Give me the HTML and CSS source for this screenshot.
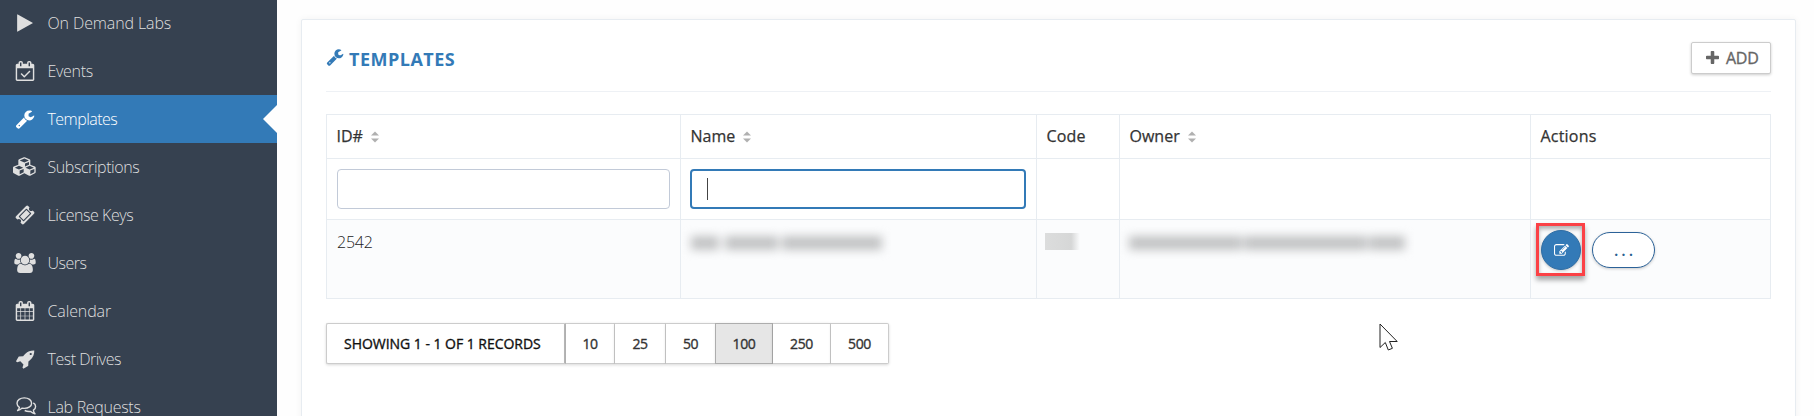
FILE: index.html
```
<!DOCTYPE html>
<html lang="en">
<head>
<meta charset="utf-8">
<title>Templates</title>
<link rel="stylesheet" href="styles.css">
</head>
<body>
<svg class="defs" aria-hidden="true">
  <symbol id="wrench" viewBox="0 0 1792 1792"><path d="M448 1472q0-26-19-45t-45-19-45 19-19 45 19 45 45 19 45-19 19-45zm644-420l-682 682q-37 37-90 37-52 0-91-37l-106-108q-38-36-38-90 0-53 38-91l681-681q39 98 114.500 173.500t173.500 114.500zm634-435q0 39-23 106-47 134-164.500 217.500t-258.500 83.500q-185 0-316.500-131.500t-131.500-316.500 131.500-316.500 316.500-131.500q58 0 121.500 16.500t107.500 46.500q16 11 16 28t-16 28l-293 169v224l193 107q5-3 79-48.500t135.500-81 70.500-35.500q15 0 23.500 10t8.500 25z"/></symbol>
  <symbol id="sort" viewBox="0 0 8 12"><path d="M4 0.500L8 4.500H0zM0 7.500H8L4 11.500z"/></symbol>
</svg>
<div class="app">
  <nav class="sidebar">
    <a class="item"><svg class="icon" viewBox="0 0 1792 1792"><path d="M1576 927l-1328 738q-23 13-39.500 3t-16.500-36v-1472q0-26 16.500-36t39.500 3l1328 738q23 13 23 31t-23 31z"/></svg><span class="t1">On Demand Labs</span></a>
    <a class="item"><svg class="icon" viewBox="-64 0 1792 1792"><path d="M1303 964l-512 512q-10 9-23 9t-23-9l-288-288q-9-10-9-23t9-22l46-46q9-9 22-9t23 9l220 220 444-444q10-9 23-9t22 9l46 46q9 9 9 22t-9 23zm-1175 700h1408v-1024h-1408v1024zm384-1216v-288q0-14-9-23t-23-9h-64q-14 0-23 9t-9 23v288q0 14 9 23t23 9h64q14 0 23-9t9-23zm768 0v-288q0-14-9-23t-23-9h-64q-14 0-23 9t-9 23v288q0 14 9 23t23 9h64q14 0 23-9t9-23zm384-64v1280q0 52-38 90t-90 38h-1408q-52 0-90-38t-38-90v-1280q0-52 38-90t90-38h128v-96q0-66 47-113t113-47h64q66 0 113 47t47 113v96h384v-96q0-66 47-113t113-47h64q66 0 113 47t47 113v96h128q52 0 90 38t38 90z"/></svg><span class="t2">Events</span></a>
    <a class="item active"><svg class="icon"><use href="#wrench"/></svg><span class="t3">Templates</span></a>
    <a class="item"><svg class="icon wide" viewBox="0 0 2304 1792"><path d="M640 1632l384-192v-314l-384 164v342zm-64-454l404-173-404-173-404 173zm1088 454l384-192v-314l-384 164v342zm-64-454l404-173-404-173-404 173zm-448-293l384-165v-266l-384 164v267zm-64-379l441-189-441-189-441 189zm1088 518v416q0 36-19 67t-52 47l-448 224q-25 14-57 14t-57-14l-448-224q-4-2-7-4-2 2-7 4l-448 224q-25 14-57 14t-57-14l-448-224q-33-16-52-47t-19-67v-416q0-38 21.500-70t56.500-48l434-186v-400q0-38 21.500-70t56.500-48l448-192q23-10 50-10t50 10l448 192q35 16 56.500 48t21.500 70v400l434 186q36 16 57 48t21 70z"/></svg><span class="t4">Subscriptions</span></a>
    <a class="item"><svg class="icon" viewBox="0 0 1792 1792"><path d="M1024 452l316 316-572 572-316-316zm-211 979l618-618q19-19 19-45t-19-45l-362-362q-18-18-45-18t-45 18l-618 618q-19 19-19 45t19 45l362 362q18 18 45 18t45-18zm889-637l-907 908q-37 37-90.500 37t-90.500-37l-126-126q56-56 56-136t-56-136-136-56-136 56l-125-126q-37-37-37-90.500t37-90.500l907-906q37-37 90.500-37t90.500 37l125 125q-56 56-56 136t56 136 136 56 136-56l126 125q37 37 37 90.500t-37 90.500z"/></svg><span class="t5">License Keys</span></a>
    <a class="item"><svg class="icon mid" viewBox="0 0 1920 1792"><path d="M593 896q-162 5-265 128h-134q-82 0-138-40.500t-56-118.500q0-353 124-353 6 0 43.500 21t97.500 42.500 119 21.500q67 0 133-23-5 37-5 66 0 139 81 256zm1071 637q0 120-73 189.500t-194 69.500h-874q-121 0-194-69.500t-73-189.500q0-53 3.500-103.500t14-109 26.500-108.500 43-97.500 62-81 85.500-53.500 111.500-20q10 0 43 21.500t73 48 107 48 135 21.500 135-21.500 107-48 73-48 43-21.500q61 0 111.500 20t85.500 53.500 62 81 43 97.500 26.500 108.500 14 109 3.500 103.500zm-1024-1277q0 106-75 181t-181 75-181-75-75-181 75-181 181-75 181 75 75 181zm704 384q0 159-112.500 271.500t-271.500 112.500-271.500-112.500-112.500-271.500 112.500-271.500 271.500-112.500 271.500 112.500 112.500 271.500zm576 225q0 78-56 118.500t-138 40.500h-134q-103-123-265-128 81-117 81-256 0-29-5-66 66 23 133 23 59 0 119-21.500t97.500-42.500 43.500-21q124 0 124 353zm-128-609q0 106-75 181t-181 75-181-75-75-181 75-181 181-75 181 75 75 181z"/></svg><span class="t6">Users</span></a>
    <a class="item"><svg class="icon" viewBox="0 0 1792 1792"><path d="M192 1664h288v-288h-288v288zm352 0h320v-288h-320v288zm-352-352h288v-320h-288v320zm352 0h320v-320h-320v320zm-352-384h288v-288h-288v288zm736 736h320v-288h-320v288zm-384-736h320v-288h-320v288zm768 736h288v-288h-288v288zm-384-352h320v-320h-320v320zm-352-864v-288q0-13-9.500-22.500t-22.500-9.500h-64q-13 0-22.500 9.500t-9.500 22.500v288q0 13 9.500 22.500t22.500 9.500h64q13 0 22.500-9.500t9.500-22.500zm736 864h288v-320h-288v320zm-384-384h320v-288h-320v288zm384 0h288v-288h-288v288zm32-480v-288q0-13-9.500-22.500t-22.500-9.500h-64q-13 0-22.500 9.500t-9.500 22.500v288q0 13 9.500 22.500t22.500 9.500h64q13 0 22.500-9.500t9.500-22.500zm384-64v1280q0 52-38 90t-90 38h-1408q-52 0-90-38t-38-90v-1280q0-52 38-90t90-38h128v-96q0-66 47-113t113-47h64q66 0 113 47t47 113v96h384v-96q0-66 47-113t113-47h64q66 0 113 47t47 113v96h128q52 0 90 38t38 90z"/></svg><span class="t7">Calendar</span></a>
    <a class="item"><svg class="icon" viewBox="-64 0 1792 1792"><path d="M1440 448q0-40-28-68t-68-28-68 28-28 68 28 68 68 28 68-28 28-68zm224-288q0 249-75.500 430.500t-253.500 360.500q-81 80-195 176l-20 379q-2 16-16 26l-384 224q-7 4-16 4-12 0-23-9l-64-64q-13-14-8-32l85-276-281-281-276 85q-3 1-9 1-14 0-23-9l-64-64q-17-19-5-39l224-384q10-14 26-16l379-20q96-114 176-195 188-187 358-258t431-71q14 0 24 9.500t10 22.500z"/></svg><span class="t8">Test Drives</span></a>
    <a class="item"><svg class="icon line" viewBox="0 0 28 20"><path d="M13.300 .9C17.500 .9 20.600 3.200 20.600 6.200S17.500 11.400 13.300 11.400L10.900 11.200C9.300 12.600 8 13.200 6.600 13.600C7.700 12.500 8.200 11.600 8.400 10.300C6.900 9.300 6 7.900 6 6.200C6 3.200 9.200 .9 13.300 .9ZM22.300 5.800C23.700 6.600 24.600 7.800 24.600 9.400C24.600 11.100 23.700 12.400 22.400 13.200C22.500 14.500 23 15.700 24 16.700C22.200 16.300 20.900 15.600 19.600 14.400C17.400 14.700 15.500 14.400 13.700 13.500"/></svg><span class="t9">Lab Requests</span></a>
  </nav>
  <main class="content">
    <section class="card">
      <header class="card-head">
        <h1 class="title"><svg class="title-icon"><use href="#wrench"/></svg><span>TEMPLATES</span></h1>
        <button class="add"><svg class="plus" viewBox="192 128 1408 1408"><path d="M1600 736v192q0 40-28 68t-68 28h-416v416q0 40-28 68t-68 28h-192q-40 0-68-28t-28-68v-416h-416q-40 0-68-28t-28-68v-192q0-40 28-68t68-28h416v-416q0-40 28-68t68-28h192q40 0 68 28t28 68v416h416q40 0 68 28t28 68z"/></svg><span>ADD</span></button>
      </header>
      <table class="grid">
        <colgroup><col class="c-id"><col class="c-name"><col class="c-code"><col class="c-owner"><col class="c-actions"></colgroup>
        <thead>
          <tr class="heads">
            <th><span class="h1">ID#</span><svg class="sort"><use href="#sort"/></svg></th>
            <th><span class="h2">Name</span><svg class="sort"><use href="#sort"/></svg></th>
            <th><span class="h3">Code</span></th>
            <th><span class="h4">Owner</span><svg class="sort"><use href="#sort"/></svg></th>
            <th><span class="h5">Actions</span></th>
          </tr>
          <tr class="filters">
            <td><div class="input"></div></td>
            <td><div class="input focus"><i class="caret"></i></div></td>
            <td></td><td></td><td></td>
          </tr>
        </thead>
        <tbody>
          <tr class="record">
            <td><span class="num">2542</span></td>
            <td><div class="masked m-name"><i class="w1"></i><i class="w2"></i><i class="w3"></i></div></td>
            <td><div class="m-code"></div></td>
            <td><div class="masked m-owner"><i class="w4"></i><i class="w5"></i><i class="w6"></i></div></td>
            <td>
              <div class="actions">
                <div class="highlight"><button class="edit"><svg viewBox="0 0 1792 1792"><path d="M888 1184l116-116-152-152-116 116v56h96v96h56zm440-720q-16-16-33 1l-350 350q-17 17-1 33t33-1l350-350q17-17 1-33zm80 594v190q0 119-84.500 203.500t-203.500 84.500h-832q-119 0-203.500-84.500t-84.500-203.500v-832q0-119 84.500-203.500t203.500-84.500h832q63 0 117 25 15 7 18 23 3 17-9 29l-49 49q-14 14-32 8-23-6-45-6h-832q-66 0-113 47t-47 113v832q0 66 47 113t113 47h832q66 0 113-47t47-113v-126q0-13 9-22l64-64q15-15 35-7t20 29zm-96-738l288 288-672 672h-288v-288zm444 132l-92 92-288-288 92-92q28-28 68-28t68 28l152 152q28 28 28 68t-28 68z"/></svg></button></div>
                <button class="more">...</button>
              </div>
            </td>
          </tr>
        </tbody>
      </table>
      <div class="pager">
        <div class="page summary"><span>SHOWING 1 - 1 OF 1 RECORDS</span></div>
        <div class="page p10">10</div>
        <div class="page p25">25</div>
        <div class="page p50">50</div>
        <div class="page p100 on">100</div>
        <div class="page p250">250</div>
        <div class="page p500">500</div>
      </div>
    </section>
  </main>
</div>
<svg class="cursor" viewBox="0 0 20 29"><path d="M1 1V24.500L6.300 19.500L9.300 27L13.400 25.300L10.500 18.500H18.200Z"/></svg>
</body>
</html>
```
FILE: styles.css
```
* { box-sizing: border-box; }
body { margin: 0; height: 416px; overflow: hidden; background: #fefefe; color: #333; font: 16px/24px "Open Sans", "Noto Sans", sans-serif; }
.defs { display: none; }
.app { display: flex; height: 416px; overflow: hidden; }

.sidebar { width: 277px; flex: none; background: #364150; margin-top: -1px; height: 418px; overflow: hidden; }
.item { display: flex; align-items: center; height: 48px; padding: 0 0 0 11px; color: #dfdfdf; font-weight: 300; white-space: nowrap; }
.item span { margin-left: 8.500px; line-height: 20px; padding-bottom: 1px; }
.t1, .t7 { letter-spacing: -.12px; }
.t2, .t9 { letter-spacing: -.3px; }
.t3 { letter-spacing: -.55px; }
.t4, .t5 { letter-spacing: -.43px; }
.t6, .t8 { letter-spacing: -.5px; }
.item.active { background: #337ab7; color: #fff; }
.item.active::after { content: ""; margin-left: auto; border: 14px solid transparent; border-left: 0; border-right-color: #fefefe; }
.icon { width: 28px; height: 20px; fill: currentColor; flex: none; margin-bottom: 1px; }
.icon.wide { width: 24px; margin: 0 2px 1px; height: 19px; }
.icon.line { fill: none; stroke: currentColor; stroke-width: 1.400; stroke-linejoin: round; }

.content { flex: 1; padding: 19px 19px 0 24px; }
.card { width: 1495px; height: 420px; border: 1px solid #e7ecf1; border-radius: 2px; background: #fff; padding: 0 24px; box-shadow: 0 0 7px rgba(0,0,0,.05); }
.card-head { display: flex; justify-content: space-between; height: 72px; padding-top: 22px; border-bottom: 1px solid #eef1f5; }
.title { display: flex; align-items: flex-start; margin: 0; color: #337ab7; font-size: 18px; line-height: 24px; font-weight: 700; }
.title span { margin-top: 5px; margin-left: 5px; letter-spacing: .5px; }
.title-icon { width: 18px; height: 18px; margin-top: 6px; fill: currentColor; }
.add { display: flex; align-items: center; width: 80px; height: 32px; padding: 0 0 0 14px; border: 1px solid #ccc; border-radius: 2px; background: #fff; color: #666; font: 500 16px/20px "Open Sans", sans-serif; letter-spacing: -.3px; -webkit-text-stroke: .35px #666; box-shadow: 0 1px 3px rgba(0,0,0,.2); }
.plus { width: 13px; height: 13px; fill: currentColor; margin-bottom: 1px; }
.add span { margin-left: 7px; }

.grid { width: 1445px; margin-top: 22px; table-layout: fixed; border-collapse: collapse; }
.c-id { width: 354px; } .c-name { width: 356px; } .c-code { width: 83px; } .c-owner { width: 411px; } .c-actions { width: 240px; }
th, td { border: 1px solid #e7ecf1; padding: 0 10px; text-align: left; }
th { font-weight: 500; font-size: 16px; padding: 0 10px 2px 9.500px; -webkit-text-stroke: .25px #333; }
.h3, .h5 { letter-spacing: .2px; }
.heads { height: 44px; } .filters { height: 61px; } .record { height: 79px; }
.sort { width: 8px; height: 12px; margin-left: 8px; fill: #b0b0b0; vertical-align: -1px; }
.input { display: flex; align-items: center; height: 40px; border: 1px solid #c2cad8; border-radius: 4px; background: #fff; }
.input.focus { border: 2px solid #337ab7; padding-left: 15px; margin: 0 0 0 -1px; }
.caret { width: 1px; height: 22px; background: #444; margin-top: -1px; }
.record { background: #fbfcfd; }
.record td { vertical-align: top; }
.num { display: block; margin-top: 10px; font-weight: 300; letter-spacing: -.2px; color: #222; }
.masked { display: flex; height: 14px; margin-top: 16px; filter: blur(5px); }
.masked i { background: #c2c3c4; }
.w1 { width: 28px; margin-right: 6px; } .w2 { width: 53px; margin-right: 4px; } .w3 { width: 100px; }
.w4 { width: 113px; margin-right: 2px; } .w5 { width: 123px; margin-right: 2px; } .w6 { width: 36px; }
.m-owner { margin-left: -1px; }
.m-code { width: 35px; height: 17px; margin: 13px 0 0 -2px; background: linear-gradient(90deg, #dcdddd, #d6d7d7 75%, #fbfcfd); }
.actions { display: flex; margin: 4px 0 0 -5px; }
.highlight { width: 49px; height: 53px; margin-top: -1px; border: 3px solid #fb4146; box-shadow: 0 4px 5px rgba(0,0,0,.35), inset 0 3px 4px rgba(0,0,0,.3); padding: 4px 2px; }
.edit { display: flex; width: 40px; height: 40px; padding: 0; align-items: center; justify-content: center; border: 1px solid #2e6da4; border-radius: 50%; background: #337ab7; box-shadow: 0 1px 3px rgba(0,0,0,.2); }
.edit svg { width: 15px; height: 15px; fill: #fff; }
.more { width: 63px; height: 36px; margin: 8px 0 0 7px; padding: 0; border: 1px solid #2b6298; border-radius: 18px; background: #fff; color: #286090; font: 600 16px/24px "Open Sans", sans-serif; letter-spacing: 3px; text-indent: 3px; box-shadow: 0 1px 3px rgba(0,0,0,.2); }

.pager { display: flex; margin-top: 24px; color: #333; font-size: 14px; font-weight: 500; letter-spacing: -.4px; -webkit-text-stroke: .35px; }
.page { display: flex; align-items: center; justify-content: center; height: 41px; border: 1px solid #ccc; border-left-width: 0; background: #fff; box-shadow: 0 1px 3px rgba(0,0,0,.16); white-space: nowrap; }
.page.summary { width: 240px; border-left-width: 1px; border-right: 2px solid #bbb; color: #111; justify-content: flex-start; padding-left: 17px; border-radius: 2px 0 0 2px; letter-spacing: -.03px; }
.p10 { width: 49px; } .p25 { width: 51px; } .p50 { width: 50px; } .p100 { width: 57px; } .p250 { width: 58px; } .p500 { width: 58px; border-radius: 0 2px 2px 0; }
.page.on { background: #e6e6e6; border-color: #adadad; box-shadow: -1px 0 #adadad, 0 1px 3px rgba(0,0,0,.16); }
.cursor { position: absolute; left: 1379px; top: 323px; width: 20px; height: 29px; fill: #fff; stroke: #222; stroke-width: 1; }
```
